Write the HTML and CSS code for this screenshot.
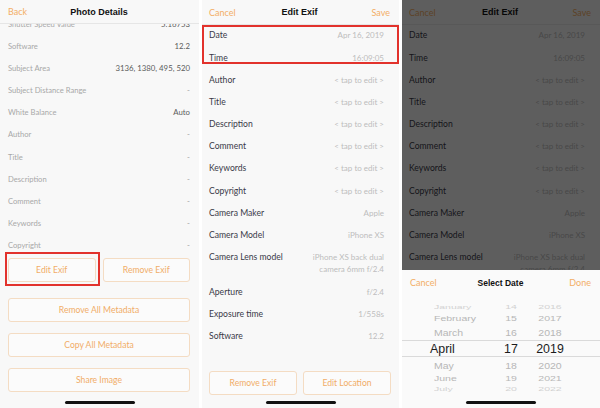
FILE: index.html
```html
<!DOCTYPE html>
<html lang="en">

<head>
    <meta charset="UTF-8">
    <title>Photo Details / Edit Exif</title>

    <link rel="stylesheet" href="styles.css">

</head>

<body>

    <div class="screens">
        <!-- 照片详情 -->
        <section class="phone">
            <header class="nav">
                <span class="nav-btn">Back</span>
                <h1 class="nav-title">Photo Details</h1>
                <span></span>
            </header>
            <ul class="info-list">
                <li class="info-row"><span class="info-label">Shutter Speed Value</span><span class="info-value">5.16753</span></li>
                <li class="info-row"><span class="info-label">Software</span><span class="info-value">12.2</span></li>
                <li class="info-row"><span class="info-label">Subject Area</span><span class="info-value">3136, 1380, 495, 520</span></li>
                <li class="info-row"><span class="info-label">Subject Distance Range</span><span class="info-value empty">-</span></li>
                <li class="info-row"><span class="info-label">White Balance</span><span class="info-value">Auto</span></li>
                <li class="info-row"><span class="info-label">Author</span><span class="info-value empty">-</span></li>
                <li class="info-row"><span class="info-label">Title</span><span class="info-value empty">-</span></li>
                <li class="info-row"><span class="info-label">Description</span><span class="info-value empty">-</span></li>
                <li class="info-row"><span class="info-label">Comment</span><span class="info-value empty">-</span></li>
                <li class="info-row"><span class="info-label">Keywords</span><span class="info-value empty">-</span></li>
                <li class="info-row"><span class="info-label">Copyright</span><span class="info-value empty">-</span></li>
            </ul>
            <div class="actions">
                <div class="btn-pair">
                    <span class="btn">Edit Exif</span>
                    <span class="btn">Remove Exif</span>
                </div>
                <span class="btn btn-wide first">Remove All Metadata</span>
                <span class="btn btn-wide">Copy All Metadata</span>
                <span class="btn btn-wide">Share Image</span>
            </div>
            <div class="home-bar"></div>
            <div class="mark mark-edit"></div>
        </section>

        <!-- 编辑 Exif -->
        <section class="phone">
            <header class="nav nav-edit">
                <span class="nav-btn">Cancel</span>
                <h1 class="nav-title">Edit Exif</h1>
                <span class="nav-btn right">Save</span>
            </header>
            <ul class="edit-list">
                <li class="edit-row"><span class="edit-label">Date</span><span class="edit-value">Apr 16, 2019</span></li>
                <li class="edit-row"><span class="edit-label">Time</span><span class="edit-value">16:09:05</span></li>
                <li class="edit-row"><span class="edit-label">Author</span><span class="edit-value">&lt; tap to edit &gt;</span></li>
                <li class="edit-row"><span class="edit-label">Title</span><span class="edit-value">&lt; tap to edit &gt;</span></li>
                <li class="edit-row"><span class="edit-label">Description</span><span class="edit-value">&lt; tap to edit &gt;</span></li>
                <li class="edit-row"><span class="edit-label">Comment</span><span class="edit-value">&lt; tap to edit &gt;</span></li>
                <li class="edit-row"><span class="edit-label">Keywords</span><span class="edit-value">&lt; tap to edit &gt;</span></li>
                <li class="edit-row"><span class="edit-label">Copyright</span><span class="edit-value">&lt; tap to edit &gt;</span></li>
                <li class="edit-row"><span class="edit-label">Camera Maker</span><span class="edit-value">Apple</span></li>
                <li class="edit-row"><span class="edit-label">Camera Model</span><span class="edit-value">iPhone XS</span></li>
                <li class="edit-row tall"><span class="edit-label">Camera Lens model</span><span class="edit-value">iPhone XS back dual<br>camera 6mm f/2.4</span></li>
                <li class="edit-row"><span class="edit-label">Aperture</span><span class="edit-value">f/2.4</span></li>
                <li class="edit-row"><span class="edit-label">Exposure time</span><span class="edit-value">1/558s</span></li>
                <li class="edit-row"><span class="edit-label">Software</span><span class="edit-value">12.2</span></li>
            </ul>
            <div class="edit-actions">
                <span class="btn">Remove Exif</span>
                <span class="btn">Edit Location</span>
            </div>
            <div class="home-bar tight"></div>
            <div class="mark mark-date"></div>
        </section>

        <!-- 选择日期 -->
        <section class="phone">
            <header class="nav nav-edit">
                <span class="nav-btn">Cancel</span>
                <h1 class="nav-title">Edit Exif</h1>
                <span class="nav-btn right">Save</span>
            </header>
            <ul class="edit-list">
                <li class="edit-row"><span class="edit-label">Date</span><span class="edit-value">Apr 16, 2019</span></li>
                <li class="edit-row"><span class="edit-label">Time</span><span class="edit-value">16:09:05</span></li>
                <li class="edit-row"><span class="edit-label">Author</span><span class="edit-value">&lt; tap to edit &gt;</span></li>
                <li class="edit-row"><span class="edit-label">Title</span><span class="edit-value">&lt; tap to edit &gt;</span></li>
                <li class="edit-row"><span class="edit-label">Description</span><span class="edit-value">&lt; tap to edit &gt;</span></li>
                <li class="edit-row"><span class="edit-label">Comment</span><span class="edit-value">&lt; tap to edit &gt;</span></li>
                <li class="edit-row"><span class="edit-label">Keywords</span><span class="edit-value">&lt; tap to edit &gt;</span></li>
                <li class="edit-row"><span class="edit-label">Copyright</span><span class="edit-value">&lt; tap to edit &gt;</span></li>
                <li class="edit-row"><span class="edit-label">Camera Maker</span><span class="edit-value">Apple</span></li>
                <li class="edit-row"><span class="edit-label">Camera Model</span><span class="edit-value">iPhone XS</span></li>
                <li class="edit-row tall"><span class="edit-label">Camera Lens model</span><span class="edit-value">iPhone XS back dual<br>camera 6mm f/2.4</span></li>
            </ul>
            <div class="scrim"></div>
            <div class="sheet">
                <div class="sheet-head">
                    <span class="nav-btn">Cancel</span>
                    <span class="sheet-title">Select Date</span>
                    <span class="nav-btn right">Done</span>
                </div>
                <div class="wheel">
                    <div class="wheel-row r3"><span class="m">January</span><span class="d">14</span><span class="y">2016</span></div>
                    <div class="wheel-row r2 top"><span class="m">February</span><span class="d">15</span><span class="y">2017</span></div>
                    <div class="wheel-row r1 top"><span class="m">March</span><span class="d">16</span><span class="y">2018</span></div>
                    <div class="wheel-row sel"><span class="m">April</span><span class="d">17</span><span class="y">2019</span></div>
                    <div class="wheel-row r1 bot"><span class="m">May</span><span class="d">18</span><span class="y">2020</span></div>
                    <div class="wheel-row r2 bot"><span class="m">June</span><span class="d">19</span><span class="y">2021</span></div>
                    <div class="wheel-row r3 bot"><span class="m">July</span><span class="d">20</span><span class="y">2022</span></div>
                </div>
                <div class="home-bar"></div>
            </div>
        </section>
    </div>

</body>

</html>
```

FILE: styles.css
```css
* {
    margin: 0;
    padding: 0;
    box-sizing: border-box;
}

body {
    background: #fff;
    font-family: Lato, "Noto Sans", sans-serif;
}

.screens {
    display: grid;
    grid-template-columns: 199px 197px 198px;
    column-gap: 3px;
    width: 600px;
    height: 408px;
}

.phone {
    position: relative;
    display: flex;
    flex-direction: column;
    height: 408px;
    background: #f8f8f8;
    overflow: hidden;
}

/* 顶部导航 */
.nav {
    display: grid;
    grid-template-columns: 1fr auto 1fr;
    align-items: center;
    flex-shrink: 0;
    height: 24px;
    padding: 0 9px 0 8px;
    border-bottom: 1px solid #e6e6e6;
    background: #f8f8f8;
}

.nav-edit {
    height: 25px;
    padding: 0 9px 0 7px;
}

.nav-btn {
    color: #f3ae66;
    font-size: 9px;
}

.nav-btn.right {
    justify-self: end;
}

.nav-title {
    font: bold 9px "Liberation Sans", Arial, sans-serif;
    color: #111;
}

/* 详情列表 */
.info-list {
    list-style: none;
    overflow: hidden;
    flex-shrink: 0;
}

.info-row {
    display: flex;
    justify-content: space-between;
    align-items: center;
    height: 22.2px;
    padding: 0 9px 0 8px;
    font-size: 7.6px;
}

.info-row:first-child {
    margin-top: -11.6px;
}

.info-label {
    color: #a8a8a8;
}

.info-value {
    color: #5c5c5c;
    font-size: 7.8px;
}

.info-value.empty {
    color: #a0a0a0;
}

.actions {
    display: flex;
    flex-direction: column;
    padding: 0 9px 0 8px;
}

.btn-pair {
    display: grid;
    grid-template-columns: 1fr 1fr;
    column-gap: 7px;
    margin-top: 1.4px;
}

.btn {
    display: flex;
    align-items: center;
    justify-content: center;
    height: 24px;
    border: 1px solid #f4dcc3;
    border-radius: 3px;
    background: #fbfbfb;
    color: #f1ad68;
    font-size: 8.6px;
}

.btn-wide {
    margin-top: 11px;
}

.btn-wide.first {
    margin-top: 16px;
}

.home-bar {
    flex-shrink: 0;
    align-self: center;
    width: 70px;
    height: 3px;
    margin: auto 0 4px;
    border-radius: 2px;
    background: #111;
}

.home-bar.tight {
    margin-top: 6.5px;
}

/* 标注框 */
.mark {
    position: absolute;
    border: 2px solid #e2322c;
}

.mark-edit {
    left: 5px;
    top: 252px;
    width: 95px;
    height: 34px;
}

.mark-date {
    left: 0;
    top: 25px;
    width: 197px;
    height: 39px;
}

/* 编辑列表 */
.edit-list {
    list-style: none;
    flex-shrink: 0;
}

.edit-row {
    display: flex;
    justify-content: space-between;
    align-items: flex-start;
    padding: 5.35px 15px 5.35px 7px;
    line-height: 11.5px;
    font-size: 8.6px;
}

.edit-row.tall {
    padding-bottom: 6.15px;
}

.edit-label {
    color: #3a3a48;
}

.edit-value {
    color: #bdbdbd;
    font-size: 8px;
    text-align: right;
}

.edit-actions {
    display: grid;
    grid-template-columns: 1fr 1fr;
    column-gap: 6px;
    margin-top: auto;
    padding: 0 8px 0 7px;
}

/* 遮罩和日期选择 */
.scrim {
    position: absolute;
    top: 0;
    right: 0;
    bottom: 0;
    left: 0;
    background: rgba(0, 0, 0, 0.62);
}

.sheet {
    position: absolute;
    top: 270px;
    right: 0;
    bottom: 0;
    left: 0;
    display: flex;
    flex-direction: column;
    background: #fafafa;
}

.sheet-head {
    display: grid;
    grid-template-columns: 1fr auto 1fr;
    align-items: center;
    height: 25px;
    padding: 0 9px 0 8px;
}

.sheet-title {
    font: bold 8.5px "Liberation Sans", Arial, sans-serif;
    color: #111;
}

.wheel {
    padding-top: 6.4px;
    font-family: "Liberation Sans", Arial, sans-serif;
}

.wheel-row {
    display: grid;
    grid-template-columns: 60px 34px 44px;
    align-items: center;
    padding-left: 32px;
    font-size: 10.5px;
    color: #b7b7b7;
    overflow: hidden;
}

.wheel-row span {
    display: block;
    line-height: 12px;
}

.wheel-row .d,
.wheel-row .y {
    text-align: center;
}

.r3 {
    height: 10.6px;
    color: #d2d2d2;
}

.r3.bot {
    height: 9px;
}

.r3 span {
    transform: scaleY(0.42);
}

.r2 {
    height: 12.5px;
}

.r2.bot {
    height: 11px;
}

.r2 span {
    transform: scaleY(0.75);
}

.r1 {
    height: 15.8px;
}

.r1.bot {
    height: 15px;
}

.r1 span {
    transform: scaleY(0.92);
}

.sel {
    height: 17.2px;
    border-top: 1px solid #dadada;
    border-bottom: 1px solid #dadada;
    font-size: 12.4px;
    color: #1c1c1c;
}

.sel .m {
    margin-left: -4px;
}
```
